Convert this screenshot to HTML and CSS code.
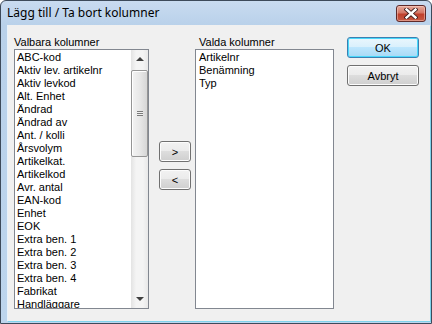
FILE: index.html
```html
<!DOCTYPE html>
<html>
<head>
<meta charset="utf-8">
<link rel="stylesheet" href="styles.css">
</head>
<body>
<div class="window">
  <div class="titlebar">
    <span class="title">Lägg till / Ta bort kolumner</span>
    <div class="close">
      <svg width="14" height="11" viewBox="0 0 14 11">
        <path d="M2.5 1.5 L11.5 9.5 M11.5 1.5 L2.5 9.5" stroke="#3a1a1a" stroke-width="4.2" stroke-linecap="square"/>
        <path d="M2.5 1.5 L11.5 9.5 M11.5 1.5 L2.5 9.5" stroke="#ffffff" stroke-width="2.4" stroke-linecap="square"/>
      </svg>
    </div>
  </div>
  <div class="client">
    <div class="col col-left">
      <div class="label">Valbara kolumner</div>
      <div class="listbox">
        <div class="items">
          <div class="item">ABC-kod</div>
          <div class="item">Aktiv lev. artikelnr</div>
          <div class="item">Aktiv levkod</div>
          <div class="item">Alt. Enhet</div>
          <div class="item">Ändrad</div>
          <div class="item">Ändrad av</div>
          <div class="item">Ant. / kolli</div>
          <div class="item">Årsvolym</div>
          <div class="item">Artikelkat.</div>
          <div class="item">Artikelkod</div>
          <div class="item">Avr. antal</div>
          <div class="item">EAN-kod</div>
          <div class="item">Enhet</div>
          <div class="item">EOK</div>
          <div class="item">Extra ben. 1</div>
          <div class="item">Extra ben. 2</div>
          <div class="item">Extra ben. 3</div>
          <div class="item">Extra ben. 4</div>
          <div class="item">Fabrikat</div>
          <div class="item">Handläggare</div>
        </div>
        <div class="scrollbar">
          <div class="sb-btn"><span class="arrow-up"></span></div>
          <div class="sb-thumb"><span class="grip"></span></div>
          <div class="sb-track"></div>
          <div class="sb-btn"><span class="arrow-down"></span></div>
        </div>
      </div>
    </div>
    <div class="col col-move">
      <div class="btn move">&gt;</div>
      <div class="btn move">&lt;</div>
    </div>
    <div class="col col-right">
      <div class="label label-r">Valda kolumner</div>
      <div class="listbox">
        <div class="items items-r">
          <div class="item">Artikelnr</div>
          <div class="item">Benämning</div>
          <div class="item">Typ</div>
        </div>
      </div>
    </div>
    <div class="col col-actions">
      <div class="btn action default">OK</div>
      <div class="btn action">Avbryt</div>
    </div>
  </div>
</div>
</body>
</html>
```

FILE: styles.css
```css
html, body {
  margin: 0;
  padding: 0;
  background: #ffffff;
}
.window {
  width: 432px;
  height: 324px;
  box-sizing: border-box;
  border: 1px solid #3d4a5a;
  border-radius: 6px 6px 0 0;
  background: linear-gradient(to bottom, #c9dbf0 0px, #b9d1ea 24px, #bdd5ed 100%);
  display: flex;
  flex-direction: column;
  overflow: hidden;
}
.titlebar {
  height: 24px;
  flex: none;
  display: flex;
  align-items: center;
  padding-left: 6px;
  position: relative;
}
.title {
  font-family: "Noto Sans", "Open Sans", sans-serif;
  font-size: 12px;
  color: #000;
  margin-top: -1px;
}
.close {
  position: absolute;
  left: 395px;
  top: 4px;
  width: 30px;
  height: 17px;
  box-sizing: border-box;
  border: 1px solid #5e2a2a;
  border-radius: 3px;
  background: linear-gradient(to bottom, #e6aa9c 0%, #d47766 45%, #c0402c 55%, #c55a44 100%);
  display: flex;
  align-items: center;
  justify-content: center;
  box-shadow: inset 0 0 0 1px rgba(255,220,210,0.45);
}
.close svg { display: block; }
.client {
  flex: 1;
  margin: 0 1px 2px 6px;
  background: #f0f0f0;
  border-left: 1px solid #e8f2fb;
  box-shadow: 1px 1px 0 #7fd3ec;
  display: flex;
  padding: 11px 0 0 6px;
  font-family: "Liberation Sans", Arial, sans-serif;
  font-size: 11px;
  color: #000;
}
.col {
  display: flex;
  flex-direction: column;
}
.label {
  height: 13px;
  line-height: 13px;
  white-space: nowrap;
}
.label-r {
  padding-left: 4px;
}
.col-left { width: 135px; }
.col-move {
  width: 32px;
  margin-left: 10px;
  padding-top: 105px;
  gap: 7px;
}
.col-right {
  width: 139px;
  margin-left: 4px;
}
.col-actions {
  width: 72px;
  margin-left: 13px;
  padding-top: 1px;
  gap: 7px;
}
.listbox {
  height: 260px;
  box-sizing: border-box;
  border: 1px solid #828790;
  background: #ffffff;
  display: flex;
  overflow: hidden;
}
.items {
  flex: 1;
  padding: 1px 0 0 2px;
  overflow: hidden;
}
.items-r { padding-left: 3px; }
.item {
  height: 13px;
  line-height: 13px;
  white-space: nowrap;
}
.scrollbar {
  width: 17px;
  flex: none;
  display: flex;
  flex-direction: column;
  background: linear-gradient(to right, #e3e3e3, #f4f4f4 30%, #f4f4f4 70%, #e8e8e8);
}
.sb-btn {
  height: 18px;
  flex: none;
  display: flex;
  align-items: center;
  justify-content: center;
}
.arrow-up {
  width: 0; height: 0;
  border-left: 4px solid transparent;
  border-right: 4px solid transparent;
  border-bottom: 4px solid #404040;
}
.arrow-down {
  width: 0; height: 0;
  border-left: 4px solid transparent;
  border-right: 4px solid transparent;
  border-top: 4px solid #404040;
}
.sb-thumb {
  height: 87px;
  margin: 2px 0 0 0;
  box-sizing: border-box;
  border: 1px solid #959595;
  border-radius: 2px;
  background: linear-gradient(to right, #f3f3f3, #e8e8e8 50%, #d6d6d6);
  box-shadow: inset 1px 1px 0 #ffffff;
  display: flex;
  align-items: center;
  justify-content: center;
}
.grip {
  width: 6px;
  height: 5px;
  background: repeating-linear-gradient(to bottom, #7a7a7a 0 1px, #f0f0f0 1px 2px);
}
.sb-track { flex: 1; }
.btn {
  box-sizing: border-box;
  border: 1px solid #707070;
  border-radius: 3px;
  background: linear-gradient(to bottom, #f2f2f2 0%, #ebebeb 49%, #dddddd 50%, #cfcfcf 100%);
  box-shadow: inset 0 0 0 1px #fcfcfc;
  display: flex;
  align-items: center;
  justify-content: center;
  font-family: "Liberation Sans", Arial, sans-serif;
  font-size: 11px;
}
.move { height: 21px; }
.action { height: 21px; }
.default {
  border-color: #3c7fb1;
  background: linear-gradient(to bottom, #eaf6fd 0%, #d9f0fc 49%, #bee6fd 50%, #a7d9f5 100%);
  box-shadow: inset 0 0 0 1px #48d8fb;
}
```
